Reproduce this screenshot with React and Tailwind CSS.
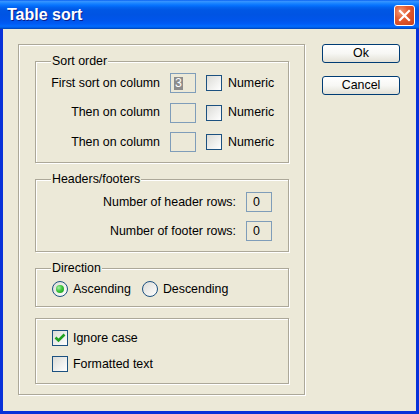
import React from "react";

const etched = "border border-[#ACA899] shadow-[inset_1px_1px_0_#ffffff,1px_1px_0_#ffffff]";

function Group({ label, className = "", children }) {
  return (
    <div className={`relative box-border w-[254px] ${etched} ${className}`}>
      {label && (
        <span className="absolute left-[15px] top-[-1px] -translate-y-1/2 bg-[#ECE9D8] px-[1px] leading-[14px]">
          {label}
        </span>
      )}
      {children}
    </div>
  );
}

function CheckBox({ checked }) {
  return (
    <span className="box-border flex h-[16px] w-[16px] shrink-0 items-center justify-center border border-[#1C5180] bg-gradient-to-br from-[#DCDCD7] to-[#FFFFFF]">
      {checked && (
        <svg width="12" height="12" viewBox="0 0 12 12">
          <path d="M1.5 5.5 L4.5 8.5 L10.5 2.5" fill="none" stroke="#21A121" strokeWidth="2.6" />
        </svg>
      )}
    </span>
  );
}

function Radio({ checked }) {
  return (
    <span className="box-border flex h-[16px] w-[16px] shrink-0 items-center justify-center rounded-full border border-[#1C5180] bg-gradient-to-br from-[#DCDCD7] to-[#FFFFFF]">
      {checked && (
        <span className="h-[8px] w-[8px] rounded-full bg-[radial-gradient(circle_at_35%_35%,#A8F0A8_0%,#3BC43B_45%,#1A961A_100%)]" />
      )}
    </span>
  );
}

function Field({ children }) {
  return (
    <span className="box-border flex h-[20px] w-[26px] shrink-0 items-center border border-[#7F9DB9] bg-[#ECE9D8]">
      {children}
    </span>
  );
}

function Button({ children, className = "" }) {
  return (
    <div
      className={`box-border flex h-[19px] w-[78px] items-center justify-center rounded-[3px] border border-[#003C74] bg-gradient-to-b from-[#FFFFFF] via-[#F7F7F4] to-[#E3E1D6] ${className}`}
    >
      {children}
    </div>
  );
}

function SortRow({ label, value }) {
  return (
    <div className="flex h-[20px] items-center">
      <span className="w-[124px] shrink-0 text-right">{label}</span>
      <span className="ml-[10px]">
        <Field>
          {value && (
            <span className="ml-[3px] bg-[#8C8C8C] px-[1px] leading-[13px] text-white">{value}</span>
          )}
        </Field>
      </span>
      <span className="ml-[10px]">
        <CheckBox />
      </span>
      <span className="ml-[6px]">Numeric</span>
    </div>
  );
}

function CountRow({ label }) {
  return (
    <div className="flex h-[20px] items-center justify-end pr-[16px]">
      <span>{label}</span>
      <span className="ml-[10px]">
        <Field>
          <span className="pl-[6px]">0</span>
        </Field>
      </span>
    </div>
  );
}

export default function App() {
  return (
    <div className="flex h-[414px] w-[419px] flex-col font-['Liberation_Sans',Arial,sans-serif] text-[12.4px] text-black">
      <div className="flex h-[29px] shrink-0 justify-between bg-[linear-gradient(180deg,#0058EE_0%,#3A93FF_4%,#288EFF_8%,#127DFF_14%,#036FFC_20%,#0262EE_26%,#0057E5_34%,#0054E3_50%,#0055EB_70%,#005BF5_82%,#026AFE_90%,#0062EF_94%,#0052D6_97%,#0040AB_100%)] pl-[7px] pr-[4px]">
        <span className="mt-[6px] text-[16px] font-bold leading-[18px] text-white [text-shadow:1px_1px_0_#0A1E8C]">
          Table sort
        </span>
        <span className="mt-[5px] box-border flex h-[21px] w-[21px] items-center justify-center rounded-[3px] border border-white bg-[radial-gradient(circle_at_30%_30%,#F39A76_0%,#E35A30_40%,#C8401A_100%)]">
          <svg width="13" height="13" viewBox="0 0 13 13">
            <path d="M2 2 L11 11 M11 2 L2 11" stroke="#FFFFFF" strokeWidth="2.2" strokeLinecap="square" />
          </svg>
        </span>
      </div>
      <div className="flex flex-1 border-x-[3px] border-b-[3px] border-[#0831D9] bg-[#ECE9D8] pl-[15px] pt-[15px]">
        <div className={`box-border flex h-[351px] w-[287px] shrink-0 flex-col pl-[16px] pt-[16px] ${etched}`}>
          <Group label="Sort order" className="h-[102px]">
            <div className="flex flex-col gap-[9.5px] pt-[11px]">
              <SortRow label="First sort on column" value="3" />
              <SortRow label="Then on column" />
              <SortRow label="Then on column" />
            </div>
          </Group>
          <Group label="Headers/footers" className="mt-[16px] h-[73px]">
            <div className="flex flex-col gap-[9px] pt-[12px]">
              <CountRow label="Number of header rows:" />
              <CountRow label="Number of footer rows:" />
            </div>
          </Group>
          <Group label="Direction" className="mt-[16px] h-[39px]">
            <div className="mt-[12px] flex h-[16px] items-center pl-[16px]">
              <Radio checked />
              <span className="ml-[5px]">Ascending</span>
              <span className="ml-[11px]">
                <Radio />
              </span>
              <span className="ml-[5px]">Descending</span>
            </div>
          </Group>
          <Group className="mt-[11px] h-[66px]">
            <div className="flex flex-col gap-[10px] pl-[16px] pt-[11px]">
              <div className="flex h-[16px] items-center">
                <CheckBox checked />
                <span className="ml-[5px]">Ignore case</span>
              </div>
              <div className="flex h-[16px] items-center">
                <CheckBox />
                <span className="ml-[5px]">Formatted text</span>
              </div>
            </div>
          </Group>
        </div>
        <div className="ml-[17px] flex flex-col">
          <Button>Ok</Button>
          <Button className="mt-[13px]">Cancel</Button>
        </div>
      </div>
    </div>
  );
}
